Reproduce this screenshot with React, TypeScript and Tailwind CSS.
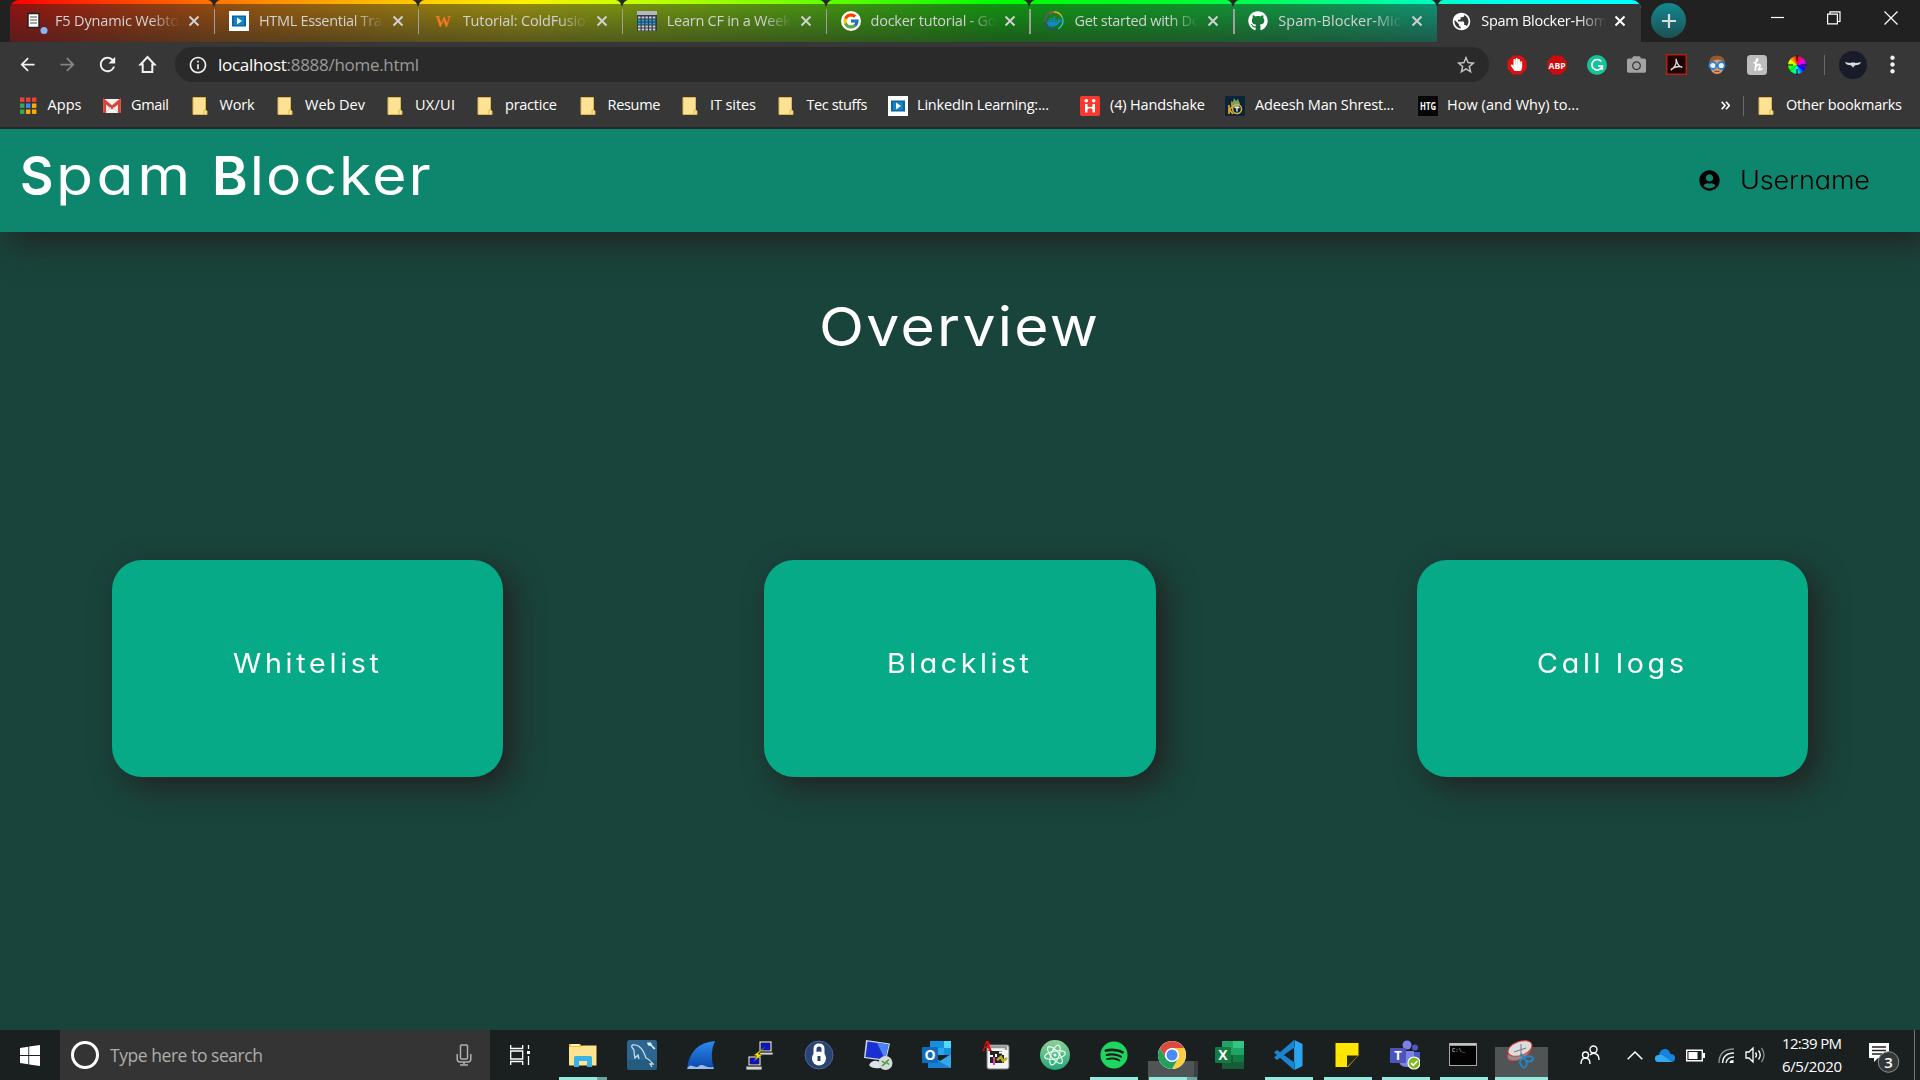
import React, { useLayoutEffect, useRef, useState } from "react";
import { FaUserCircle, FaGithub, FaSpotify, FaDocker, FaHandPaper, FaCamera } from "react-icons/fa";
import { FcGoogle } from "react-icons/fc";
import { MdArrowBack, MdArrowForward, MdRefresh, MdInfoOutline, MdStarBorder, MdPublic, MdMoreVert } from "react-icons/md";

/** Text tracked so that its glyph run spans exactly `w` pixels. */
function Fit({ w, className = "", inner = "", children }: { w: number; className?: string; inner?: string; children: React.ReactNode }) {
  const ref = useRef<HTMLSpanElement>(null);
  const [spacing, setSpacing] = useState(0);
  useLayoutEffect(() => {
    const el = ref.current;
    if (!el) return;
    const n = Math.max(2, (el.textContent || "").length);
    el.style.letterSpacing = "0px";
    const base = el.getBoundingClientRect().width;
    el.style.letterSpacing = "1px";
    const slope = el.getBoundingClientRect().width - base;
    const next = (w - base) / (slope * ((n - 1) / n));
    el.style.letterSpacing = next + "px";
    setSpacing(next);
  }, [w]);
  return (
    <span className={"block shrink-0 whitespace-nowrap " + className} style={{ width: w }}>
      <span ref={ref} className={"inline-block origin-left " + inner} style={{ letterSpacing: spacing }}>{children}</span>
    </span>
  );
}

const Svg = ({ s = 20, vb = "0 0 20 20", children }: { s?: number; vb?: string; children: React.ReactNode }) => (
  <svg width={s} height={s} viewBox={vb} className="block shrink-0">{children}</svg>
);

/* ---------- favicons ---------- */
const PageIcon = () => (
  <Svg s={26} vb="0 0 26 26">
    <rect x="1" y="5.500" width="11" height="14" fill="#fff" stroke="#222" strokeWidth="1.500" />
    <path d="M3 9h7M3 12h7M3 15h7" stroke="#888" strokeWidth="1.300" />
    <circle cx="17" cy="22.500" r="3.500" fill="#8ab4f8" />
  </Svg>
);
const LinkedInLearning = () => (
  <Svg><rect width="20" height="20" fill="#fff" /><rect x="3" y="4.500" width="14" height="11" fill="#0a66a8" /><rect x="5" y="6" width="10" height="8" fill="#1484c4" /><path d="M8 6.500l5 3.500-5 3.500z" fill="#fff" /></Svg>
);
const WIcon = () => <Svg><text x="10" y="15.500" textAnchor="middle" fontFamily="Liberation Serif" fontWeight="bold" fontSize="16" fill="#f37a20">W</text></Svg>;
const GridIcon = () => (
  <Svg>
    <rect width="20" height="20" fill="#333a4c" /><rect width="20" height="4" fill="#b4b8bc" />
    <path d="M1 6.500h18M1 15.500h18M1 18.500h18" stroke="#c8ccd2" strokeWidth="2" strokeDasharray="2.500 1.200" />
    <path d="M1 9.500h18M1 12.500h18" stroke="#1ea3dc" strokeWidth="2" strokeDasharray="2.500 1.200" />
  </Svg>
);
const GoogleIcon = () => <span className="flex size-5 items-center justify-center rounded-full bg-white"><FcGoogle size={18} /></span>;
const DockerIcon = () => (
  <span className="relative flex size-5 items-center justify-center">
    <FaDocker size={15} color="#1488c6" />
    <svg className="absolute inset-0" viewBox="0 0 20 20" fill="none" strokeWidth="1.300">
      <path d="M1 11A9 9 0 0 1 5 2.500" stroke="#8a3d9b" /><path d="M5 2.500A9 9 0 0 1 10 1" stroke="#e0405b" /><path d="M10 1A9 9 0 0 1 18 6" stroke="#e8a83c" />
      <path d="M18 6A9 9 0 0 1 14 18" stroke="#2bc4c8" /><path d="M14 18A9 9 0 0 1 1 11" stroke="#304a78" />
    </svg>
  </span>
);

const tabs = [
  { t: "F5 Dynamic Webto", w: 124, i: <PageIcon /> },
  { t: "HTML Essential Tra", w: 123, i: <LinkedInLearning /> },
  { t: "Tutorial: ColdFusio", w: 123, i: <WIcon /> },
  { t: "Learn CF in a Week", w: 124, i: <GridIcon /> },
  { t: "docker tutorial - Go", w: 126, i: <GoogleIcon /> },
  { t: "Get started with Do", w: 126, i: <DockerIcon /> },
  { t: "Spam-Blocker-Micl", w: 126, i: <FaGithub size={20} color="#fff" /> },
  { t: "Spam Blocker-Hom", w: 126, i: <MdPublic size={21} color="#fff" /> },
];

const Close = ({ color }: { color: string }) => (
  <svg width="12" height="12" viewBox="0 0 12 12" className="block"><path d="M1.500 1.500l9 9M10.500 1.500l-9 9" stroke={color} strokeWidth="2" /></svg>
);

function TabStrip() {
  return (
    <div className="flex h-[42px] bg-[#212121]">
      <div className="ml-[10px] flex h-[42px] w-[1631px] overflow-hidden rounded-t-[9px] bg-[linear-gradient(to_right,#ff0000_0px,#ff7800_210px,#ffc800_400px,#fff000_510px,#c8ff00_620px,#60ff00_820px,#00ff00_990px,#00ff30_1180px,#00ff90_1350px,#00ffe8_1480px,#00ffff_1600px)]">
        {tabs.map((tab, i) => {
          const active = i === 7;
          return (
            <div key={tab.t} className="relative flex w-[203.900px] shrink-0 flex-col">
              <div className="h-1" />
              <div className={active ? "h-[38px] bg-[#373737]" : "h-[38px] bg-[linear-gradient(to_bottom,#22222280,#252525c0)]"}>
                <div className={"flex h-[34px] items-center " + (active ? "pl-[14px]" : "pl-[15px]")}>
                  <div className={"flex h-[26px] w-[30px] items-center" + (i === 0 ? " pl-[2px]" : "")}>{tab.i}</div>
                  <div className="w-[129px] overflow-hidden [mask-image:linear-gradient(to_right,black_74%,transparent_97%)]">
                    <Fit w={tab.w} className={active ? "text-[14.500px] leading-6 text-white" : "text-[14.500px] leading-6 text-[#d2d2d2]"}>{tab.t}</Fit>
                  </div>
                  <div className="ml-[4px]"><Close color={active ? "#ffffff" : "#d0d0d0"} /></div>
                </div>
              </div>
              {i > 0 && (
                <svg className="absolute top-0 -left-[6px]" width="12" height="7" viewBox="0 0 12 7"><path d="M0 0H12Q7.500 1 6 7Q4.500 1 0 0z" fill="#252525" /></svg>
              )}
              {i > 0 && i < 7 && <div className="absolute top-[9px] left-0 h-[25px] w-[1.500px] bg-[#a0a0a0]" />}
            </div>
          );
        })}
      </div>
      <div className="mt-[3px] ml-[10px] flex size-[35px] items-center justify-center rounded-full bg-[linear-gradient(to_bottom,#128890,#1d5052)]">
        <svg width="14" height="14" viewBox="0 0 14 14"><path d="M7 0v14M0 7h14" stroke="#d8dede" strokeWidth="2.200" /></svg>
      </div>
      <div className="ml-auto flex h-9 items-center pr-[22px]">
        <svg width="14" height="14" viewBox="0 0 14 14" className="mr-[42px]"><path d="M0 6.500h13" stroke="#fff" strokeWidth="1.200" /></svg>
        <svg width="14" height="14" viewBox="0 0 14 14" className="mr-[43px]" fill="none" stroke="#fff" strokeWidth="1.200"><path d="M.6 3.100h9.800v9.800H.6zM3 3V.8h10v9.700h-2.400" /></svg>
        <svg width="14" height="14" viewBox="0 0 14 14"><path d="M.5.5l13 13M13.500.5l-13 13" stroke="#fff" strokeWidth="1.200" /></svg>
      </div>
    </div>
  );
}

/* ---------- toolbar ---------- */
const octagon = "M6 .5h8L19.500 6v8L14 19.500H6L.5 14V6z";
const extensions = [
  <span className="relative flex size-5 items-center justify-center"><Svg><path d={octagon} fill="#e10f12" /></Svg><FaHandPaper className="absolute" size={13} color="#fff" /></span>,
  <Svg><path d={octagon} fill="#cf0a0d" /><text x="10" y="13.500" fontSize="9.500" fontWeight="bold" textAnchor="middle" fill="#fff" fontFamily="Open Sans" textLength="17" lengthAdjust="spacingAndGlyphs">ABP</text></Svg>,
  <Svg><circle cx="10" cy="10" r="10" fill="#15c39a" /><path d="M14.300 6.500A5.300 5.300 0 1 0 15.300 11H11M15.300 10.500v4.500" fill="none" stroke="#fff" strokeWidth="1.700" /></Svg>,
  <FaCamera size={19} color="#a3a3a3" />,
  <Svg s={21}><rect x=".7" y=".7" width="18.600" height="18.600" fill="#1e0504" stroke="#b9200f" strokeWidth="1.400" /><path d="M9.500 4.500C10.500 8 9 12 4.500 15.500M9.700 5Q10.500 11 15.500 13M5 14.500Q9 11 15.500 12.300" fill="none" stroke="#ddd" strokeWidth="1.300" /></Svg>,
  <Svg><path d="M3 8Q3 1 10 1t7 7l-1 7q-2 4-6 4t-6-4z" fill="#d99a6b" /><path d="M2 11Q1 .5 10 .5T18 11q-1-6-7-6.500Q4 5 2 11z" fill="#96592f" /><circle cx="5.800" cy="10.500" r="3.500" fill="#e8f4ff" stroke="#2a7fd0" strokeWidth="1.800" /><circle cx="14.200" cy="10.500" r="3.500" fill="#e8f4ff" stroke="#2a7fd0" strokeWidth="1.800" /><path d="M7.500 16.300h5" stroke="#7d2f22" /></Svg>,
  <Svg><rect width="20" height="20" rx="3.500" fill="#bdbdbd" /><path d="M6.500 8Q12 6 10.500 4T8.300 16M8.500 12.500Q11 8.500 12.500 9.500T12 13.500 15.500 13.500" fill="none" stroke="#fff" strokeWidth="1.700" /></Svg>,
  <span className="relative flex size-5 items-center justify-center"><span className="size-[18px] rounded-full bg-[conic-gradient(#f00,#f0f,#00f,#0ff,#0f0,#ff0,#f00)]" /><svg className="absolute inset-0" viewBox="0 0 20 20"><path d="M10 0v6M10 14v6M0 10h6M14 10h6" stroke="#111" strokeWidth="1.200" /><path d="M4 4l12 12M16 4L4 16" stroke="#2226" strokeWidth=".6" /></svg></span>,
];

function Toolbar() {
  return (
    <div className="flex h-[45px] items-center pl-[17px] text-[#f1f1f1]">
      <MdArrowBack size={21} className="mr-[19px]" />
      <MdArrowForward size={21} color="#858585" className="mr-[18px]" />
      <MdRefresh size={23} className="mr-[17px]" />
      <svg width="23" height="23" viewBox="0 0 23 23" fill="none" stroke="#f1f1f1" strokeWidth="2" className="mr-[16px]"><path d="M11.500 4L4.500 11.500h2.200v7.500h9.600v-7.500h2.200z" /></svg>
      <div className="flex h-[35px] w-[1314px] items-center rounded-full bg-[#2a2a2a] pr-[12px] pl-[13px]">
        <MdInfoOutline size={20} className="mr-[10px]" />
        <Fit w={201} className="text-[17px] leading-7 text-[#9b9b9b]"><span className="text-white">localhost</span>:8888/home.html</Fit>
        <MdStarBorder size={22} color="#c6c6c6" className="ml-auto" />
      </div>
      <div className="ml-[7.500px] flex">
        {extensions.map((e, i) => <div key={i} className="flex w-10 items-center justify-center">{e}</div>)}
      </div>
      <div className="ml-[7px] h-[20px] w-px bg-[#6b6b6b]" />
      <div className="ml-[14px] flex size-7 items-center justify-center rounded-full bg-[#191b28]">
        <svg width="16" height="8" viewBox="0 0 16 8"><path d="M0 1q3 1 6 1l1-1 1 1 1-1 1 1q3 0 6-1-1 3-4 3-3 0-4 3-1-3-4-3T0 1z" fill="#d5d9e0" /></svg>
      </div>
      <MdMoreVert size={27} className="ml-[12.500px]" />
    </div>
  );
}

/* ---------- bookmarks ---------- */
const Folder = () => (
  <Svg s={20}><path d="M1 1.500h12.500v12.500l1.500 1v3.500H1z" fill="#fde293" stroke="#dcb850" strokeWidth="1" /><path d="M12 18v-4h1.500" stroke="#e0b840" fill="none" /></Svg>
);
const AppsIcon = () => (
  <Svg s={18} vb="0 0 18 18">
    {["#ea4335", "#ea4335", "#ea4335", "#34a853", "#4285f4", "#fbaf05", "#34a853", "#fbaf05", "#fbaf05"].map((c, i) => (
      <rect key={i} x={(i % 3) * 6} y={Math.floor(i / 3) * 6 + 0.5} width="4.400" height="4.400" fill={c} />
    ))}
  </Svg>
);
const Gmail = () => (
  <Svg s={18} vb="0 0 18 18"><rect x="0" y="2" width="18" height="14" rx="1.500" fill="#f2f2f2" /><path d="M1.600 16V4L9 10.500 16.400 4v12" fill="none" stroke="#db4437" strokeWidth="3" /><path d="M3 15l5-5M15 15l-5-5" stroke="#ccc" strokeWidth=".8" /></Svg>
);
const Handshake = () => (
  <Svg><rect width="20" height="20" rx="2" fill="#fa382f" /><circle cx="6.300" cy="4.800" r="1.800" fill="#fff" /><circle cx="13.700" cy="4.800" r="1.800" fill="#fff" /><path d="M5 8v8.500h2.500V13q2.500-1.500 5 0v3.500H15V8h-2.500v2.500q-2.500 1-5 0V8z" fill="#fff" /></Svg>
);
const Adeesh = () => (
  <Svg><rect width="20" height="20" fill="#0b2437" /><path d="M6 10V5l2 1 1-4 2 3 2-2 2 5-2 4z" fill="#7fa05a" /><path d="M4 9v9M4 14l4-4M4 13l4 5" stroke="#e9a820" strokeWidth="1.700" /><circle cx="12" cy="13" r="4.500" fill="none" stroke="#d8b14c" strokeWidth="1.500" /><path d="M9.500 11.500h5M12 11.500v4" stroke="#eee" strokeWidth="1.400" /></Svg>
);
const Htg = () => <Svg><rect width="20" height="20" fill="#060606" /><text x="10" y="14" fontSize="11" textAnchor="middle" fontWeight="bold" fill="#fff" fontFamily="Open Sans" textLength="16" lengthAdjust="spacingAndGlyphs">HTG</text></Svg>;

/* cell: item width up to the next item, gap: icon column, w: label width */
const bookmarks = [
  { t: "Apps", cell: 82.5, gap: 27.5, w: 34, i: <AppsIcon /> },
  { t: "Gmail", cell: 89, gap: 28.5, w: 38, i: <Gmail /> },
  { t: "Work", cell: 85.5, gap: 28, w: 35, i: <Folder /> },
  { t: "Web Dev", cell: 110, gap: 28, w: 60, i: <Folder /> },
  { t: "UX/UI", cell: 90, gap: 28, w: 40, i: <Folder /> },
  { t: "practice", cell: 102.5, gap: 28, w: 52, i: <Folder /> },
  { t: "Resume", cell: 102.5, gap: 28, w: 53, i: <Folder /> },
  { t: "IT sites", cell: 96, gap: 28, w: 46, i: <Folder /> },
  { t: "Tec stuffs", cell: 110, gap: 28.5, w: 61, i: <Folder /> },
  { t: "LinkedIn Learning:...", cell: 192, gap: 29, w: 132, i: <LinkedInLearning /> },
  { t: "(4) Handshake", cell: 145, gap: 30, w: 95, i: <Handshake /> },
  { t: "Adeesh Man Shrest...", cell: 193, gap: 30, w: 139, i: <Adeesh /> },
  { t: "How (and Why) to...", cell: 180, gap: 29, w: 132, i: <Htg /> },
];

function Bookmarks() {
  return (
    <div className="flex h-[40px] items-center border-b-2 border-[#373737] pb-[1px] pl-[20px] text-[14.500px] leading-6 text-white">
      {bookmarks.map((b) => (
        <div key={b.t} className="flex shrink-0 items-center" style={{ width: b.cell }}>
          <div className="shrink-0" style={{ width: b.gap }}>{b.i}</div>
          <Fit w={b.w} className="-mt-px">{b.t}</Fit>
        </div>
      ))}
      <div className="ml-auto flex items-center pr-[18px]">
        <svg width="9" height="9" viewBox="0 0 9 9" fill="none" stroke="#fff" strokeWidth="1.700"><path d="M.7 .7L4 4.500.7 8.300M5 .7l3.300 3.800L5 8.300" /></svg>
        <div className="ml-[13px] h-[20px] w-px bg-[#6b6b6b]" />
        <div className="ml-[14px] w-[28px]"><Folder /></div>
        <Fit w={116} className="-mt-px">Other bookmarks</Fit>
      </div>
    </div>
  );
}

/* ---------- page ---------- */
function Page() {
  return (
    <main className="flex h-[901px] flex-col overflow-hidden bg-[#19443b] font-['Inter',sans-serif] [font-feature-settings:'cv11'] text-white">
      <header className="flex h-[103px] shrink-0 items-center bg-[#0e866d] pl-[20px] shadow-[10px_10px_30px_#222222]">
        <h1 className="-mt-[9px] flex gap-[21px] text-[54px] leading-[70px] font-normal">
          <Fit w={171} inner="scale-x-[1.120]"><b className="inline-block origin-left scale-x-[0.850] font-semibold tracking-[-3px]">S</b>pam</Fit>{" "}
          <Fit w={219} inner="scale-x-[1.090]"><b className="inline-block origin-left scale-x-[0.920] font-semibold tracking-[-1px]">B</b>locker</Fit>
        </h1>
        <div className="ml-auto flex items-center pr-[50px] text-black">
          <FaUserCircle size={21} className="mr-[20px]" />
          <Fit w={130} inner="scale-x-[1.080]" className="-mt-[2px] text-[25px] leading-9 font-light">Username</Fit>
        </div>
      </header>
      <div className="mt-[60px] flex justify-center pr-[3px]">
        <Fit w={279} inner="scale-x-[1.090]" className="text-[54px] leading-[70px]">Overview</Fit>
      </div>
      <div className="mt-[198px] flex justify-between px-[112px]">
        {[{ t: "Whitelist", w: 146 }, { t: "Blacklist", w: 142 }, { t: "Call logs", w: 147 }].map((c) => (
          <section key={c.t} className="flex h-[217px] w-[391.300px] items-center justify-center rounded-[30px] bg-[#06aa87] pr-[4px] pb-[10px] shadow-[10px_10px_30px_#222222]">
            <Fit w={c.w} inner="scale-x-[1.060]" className="text-[27px] leading-10">{c.t}</Fit>
          </section>
        ))}
      </div>
    </main>
  );
}

/* ---------- taskbar ---------- */
const V = ({ children }: { children: React.ReactNode }) => <svg width="30" height="30" viewBox="0 0 30 30" className="block">{children}</svg>;

const apps = [
  { k: "explorer", bar: true, i: <V><path d="M1 4h11l2 2h14v19H1z" fill="#f8c22c" /><path d="M1 7h12l1.500-1.500H28.500V25.500H1z" fill="#fee391" /><path d="M3 5h8" stroke="#fff" strokeWidth="1.500" /><path d="M6 27V17.500q0-1.500 1.500-1.500h15q1.500 0 1.500 1.500V27h-5v-6h-8v6z" fill="#39b1ea" /></V> },
  { k: "mysql", bar: false, i: <V><rect width="30" height="30" rx="2.500" fill="#2c6690" /><path d="M0 20h30v7.500q0 2.500-2.500 2.500h-25Q0 30 0 27.500z" fill="#20506f" opacity=".5" /><path d="M5 5q7-1 11 6 2 4 3 7 3 1 7 6h-3l2 3M5 5q-1 2 2 5 0 4 1 8l3-3 1 4" fill="none" stroke="#c4dbe8" strokeWidth="1.300" /><path d="M20 2.500l1 3 3 .5 3 3.500 1.500-1-3.500-3.500-1-2.500z" fill="#e5f0f5" /></V> },
  { k: "wireshark", bar: false, i: <V><defs><linearGradient id="fin" x2="0" y2="1"><stop stopColor="#2b8cf0" /><stop offset="1" stopColor="#0b45a8" /></linearGradient></defs><path d="M1 29Q4 3 29 1q-6 12-1 28z" fill="url(#fin)" /><path d="M1 29q2-5 6-3t6 0 6 0 8 1l1 2z" fill="#9bbbe8" /></V> },
  { k: "putty", bar: false, i: <V><g stroke="#222" strokeWidth=".8"><path d="M14 1h13v11H14zM15 12h13v3H14zM3 16h13v10H3zM1 26h16v4H1z" fill="#d4d4d4" /><path d="M16 3h9v7h-9zM5 18h9v6H5z" fill="#0a12d8" /></g><path d="M20 7l-7 7 4 1-8 6 3-5-3-1z" fill="#ffe500" stroke="#665500" strokeWidth=".5" /></V> },
  { k: "keepass", bar: false, i: <V><circle cx="15" cy="15" r="14" fill="#294474" stroke="#4d6594" strokeWidth="1" /><path d="M11 16V9q0-4 4-4t4 4v7" stroke="#fff" strokeWidth="3" fill="none" /><circle cx="15" cy="18.500" r="7" fill="#fff" /><path d="M15 16v5" stroke="#294474" strokeWidth="3" /></V> },
  { k: "rdp", bar: false, i: <V><path d="M3 0l24 3.500L23 21 1 18z" fill="#c9d6ea" /><path d="M4.500 1.500l21 3L22 19.500 2.500 17z" fill="#1a2fd0" /><path d="M14 2.800l11.500 1.700L22 19.500z" fill="#4c82f4" /><path d="M6 25q3-5 8-4l6 2-3 5q-8 1-11-3z" fill="#dce2ea" /><circle cx="22.500" cy="23" r="7" fill="#d7dbd7" /><path d="M19 21l3 2.500-3 2.500M26 19.500l-3 2.500 3 2.500" stroke="#3c9c38" fill="none" strokeWidth="1.500" /></V> },
  { k: "outlook", bar: false, i: <V><path d="M8 1h21v14H8z" fill="#1490df" /><path d="M15 8h7v7h-7z" fill="#28a8ea" /><path d="M22 1h7v7h-7z" fill="#50d9ff" /><path d="M6 14l12 7 11-7v14H6z" fill="#36a5ea" /><path d="M6 15l23 13H6z" fill="#1a7fd0" /><rect y="7" width="16" height="16" rx="1" fill="#0f6cbd" /><text x="8" y="20" fontSize="14" fontWeight="bold" fill="#fff" textAnchor="middle" fontFamily="Open Sans">O</text></V> },
  { k: "editor", bar: false, i: <V><rect x="6" y="5" width="22" height="24" rx="2" fill="#f4f4f4" stroke="#777" /><path d="M8 7h17v3" stroke="#999" strokeWidth="2.500" fill="none" /><path d="M9 11h12v4h2v8H9z" fill="#252525" /><path d="M9 16h3M15 14v3M18 12.500h3" stroke="#fff" strokeWidth="2" /><path d="M16 20l4-3 2 4 4-3" stroke="#b8ae20" strokeWidth="2.500" fill="none" /><path d="M13 17v8" stroke="#e0439b" strokeWidth="2" /><text x="6" y="11" fontSize="15" fontWeight="bold" fill="#e10a0a" textAnchor="middle" fontFamily="Liberation Serif">A</text></V> },
  { k: "atom", bar: false, i: <V><defs><linearGradient id="atom" x2="0" y2="1"><stop stopColor="#8fd19a" /><stop offset="1" stopColor="#20a877" /></linearGradient></defs><circle cx="15" cy="15" r="15" fill="url(#atom)" /><g fill="none" stroke="#eafbf0" strokeWidth="1.200"><ellipse cx="15" cy="15" rx="4" ry="10.500" transform="rotate(20 15 15)" /><ellipse cx="15" cy="15" rx="4" ry="10.500" transform="rotate(80 15 15)" /><ellipse cx="15" cy="15" rx="4" ry="10.500" transform="rotate(140 15 15)" /></g><circle cx="15" cy="15" r="1.500" fill="#fff" /></V> },
  { k: "spotify", bar: true, i: <FaSpotify size={28} color="#1ed760" /> },
  { k: "chrome", bar: true, i: <V><g transform="translate(15 15)"><circle r="14" fill="#fff" /><path d="M-12.120-7A14 14 0 0 1 12.120-7L0-7A7 7 0 0 0-6.060 3.500z" fill="#dc4a3d" /><path d="M12.120-7A14 14 0 0 1 0 14L6.060 3.500A7 7 0 0 0 0-7z" fill="#fccd3e" /><path d="M0 14A14 14 0 0 1-12.120-7L-6.060 3.500A7 7 0 0 0 6.060 3.500z" fill="#20a05a" /><circle r="6.800" fill="#fff" /><circle r="5.500" fill="#4a8af4" /></g></V> },
  { k: "excel", bar: false, i: <V><path d="M7 1h22v28H7z" fill="#21a366" /><path d="M18 1h11v7H18z" fill="#33c481" /><path d="M7 15h22v14H7z" fill="#185c37" /><path d="M18 15h11v7H18z" fill="#107c41" /><rect y="7" width="16" height="16" rx="1" fill="#107c41" /><text x="8" y="20" fontSize="14" fontWeight="bold" fill="#fff" textAnchor="middle" fontFamily="Open Sans">X</text></V> },
  { k: "vscode", bar: true, i: <V><path d="M21 0v30L1 12.500 4 10 22 23V7L4 20 1 17.500z" fill="#1a84cf" /><path d="M21.500 0l8 4v22l-8 4z" fill="#2ba5f0" /></V> },
  { k: "notes", bar: true, i: <V><path d="M3.500 3h23v12.500L16 27H3.500z" fill="#ffe500" /><path d="M15 15.500h11.500L15 27z" fill="#26281c" /></V> },
  { k: "teams", bar: true, i: <V><circle cx="17" cy="5" r="4.500" fill="#7b83eb" /><circle cx="25" cy="7.500" r="3" fill="#5059c9" /><path d="M20 12h10v8q0 5-5 5h-5z" fill="#5059c9" /><path d="M9 11h15v9q0 7-7.500 7T9 20z" fill="#7b83eb" /><rect y="8" width="16" height="15" rx="1" fill="#4b53bc" /><text x="8" y="20" fontSize="13" fontWeight="bold" fill="#fff" textAnchor="middle" fontFamily="Open Sans">T</text><circle cx="24" cy="23" r="6" fill="#80bb18" stroke="#fff" strokeWidth="1.200" /><path d="M21 23l2.300 2.300L27.300 21" stroke="#fff" strokeWidth="1.800" fill="none" /></V> },
  { k: "cmd", bar: true, i: <V><rect x="1.500" y="3.500" width="27" height="22" fill="#030303" stroke="#a6a6a6" /><path d="M2 4.500h26" stroke="#c6c6c6" strokeWidth="2.500" /><text x="4" y="11.500" fontSize="5.500" fill="#ddd" fontFamily="Liberation Mono">C:\_</text></V> },
  { k: "snip", bar: true, i: <V><ellipse cx="13" cy="13" rx="12.500" ry="6.500" transform="rotate(-25 13 13)" fill="#8b8f8f" stroke="#c93636" /><ellipse cx="14" cy="8.500" rx="12.500" ry="7" transform="rotate(-20 14 8.500)" fill="#dadddd" stroke="#d63a3a" /><path d="M15 4v13M8 12l12-4" stroke="#777" /><path d="M15 14l4 5M18 18q5-3 8-1t-1 4-6-2M18 18q4 4 2 8t-5-1 3-7" stroke="#2482c5" strokeWidth="2" fill="none" /></V> },
];

function Taskbar() {
  return (
    <footer className="flex h-[50px] bg-[#1a201f] text-white">
      <div className="flex w-[60px] items-center justify-center">
        <svg width="20" height="21" viewBox="0 0 20 21" fill="#fff"><path d="M0 3l8.300-1.200V10H0zM9.200 1.600L20 0v10H9.200zM0 11h8.300v8.200L0 18zM9.200 11H20v10L9.200 19.400z" /></svg>
      </div>
      <div className="flex w-[430px] items-center bg-[#343434] pr-[18px] pl-[11px]">
        <div className="size-[28px] rounded-full border-[3.500px] border-white" />
        <Fit w={153} className="ml-[11px] text-[17.500px] leading-7 text-[#adadad]">Type here to search</Fit>
        <svg width="16" height="22" viewBox="0 0 16 22" className="ml-auto" fill="none" stroke="#b0b0b0" strokeWidth="1.500"><rect x="4.500" y="1" width="7" height="14" rx="1" /><path d="M1.200 10v5q0 3 3 3h7.600q3 0 3-3v-5M8 18v3M4 21h8" /></svg>
      </div>
      <div className="flex w-[63px] items-center pl-[20px]">
        <svg width="21" height="20" viewBox="0 0 21 20" fill="none" stroke="#fff" strokeWidth="1.300"><path d="M.7 0v3.500h12V0M.7 6h12v8h-12zM.7 20v-3.500h12V20M18.500 0v4M18.500 11v9" /><path d="M17 6h3v3h-3z" fill="#fff" stroke="none" /></svg>
      </div>
      {apps.map((a, i) => {
        const grouped = a.k === "explorer" || a.k === "chrome";
        const snip = a.k === "snip";
        return (
          <div key={a.k} className={"relative flex shrink-0 justify-center " + (i < 10 ? "w-[59px]" : "w-[58.200px]")}>
            {snip && <div className="absolute top-[17px] left-[3px] h-[33px] w-[53px] bg-[#505454]" />}
            {a.k === "chrome" && <div className="absolute top-[31px] left-[5px] h-[19px] w-[50px] border-r-4 border-[#3c4040] bg-[#505454]" />}
            <div className="relative flex h-[50px] items-center">{a.i}</div>
            {a.bar && (
              <div className={"absolute bottom-0 flex h-[3px] " + (snip ? "left-[3px] w-[53px]" : "left-[6px] w-[48px]")}>
                <div className="flex-1 bg-[#92ebdc]" />
                {grouped && <div className="w-[10px] bg-[#68a59c]" />}
              </div>
            )}
          </div>
        );
      })}
      <div className="ml-auto flex shrink-0 items-center">
        <svg width="20" height="20" viewBox="0 0 20 20" fill="none" stroke="#fff" strokeWidth="1.400" className="mr-[27px]"><circle cx="13.500" cy="4.500" r="3.500" /><circle cx="5.500" cy="10" r="3" /><path d="M1 19q0-6 4.500-6t4.500 6M10 10q3-3 6-1 3 1 3 6" /></svg>
        <svg width="16" height="9" viewBox="0 0 16 9" fill="none" stroke="#fff" strokeWidth="1.500" className="mr-[12px]"><path d="M.7 8.300L8 1l7.300 7.300" /></svg>
        <svg width="20" height="13" viewBox="0 0 20 13" className="mr-[11px]"><path d="M4 13q-4 0-4-3.500T4 6q1-6 6-6 4 0 5.500 5Q20 5 20 9t-4 4z" fill="#1683dc" /><path d="M4 13q-4 0-4-3.500T4 6q3-1 6 2l7 5z" fill="#36a7f1" /></svg>
        <svg width="19" height="13" viewBox="0 0 19 13" className="mr-[13px]"><path d="M.7 1.200h15.600v10.600H.7z" fill="none" stroke="#fff" strokeWidth="1.400" /><path d="M2.500 3h9v7h-9zM16.500 4H19v5h-2.500z" fill="#fff" /></svg>
        <svg width="17" height="17" viewBox="0 0 17 17" fill="none" strokeWidth="1.400" className="mr-[10px]"><path d="M1 16Q1 2 16 2" stroke="#8b8f8f" /><path d="M4.500 16Q5 6 16 6M8 16q1-6 8-6" stroke="#f0f0f0" /><path d="M11.500 16q0-3 4-3v3z" fill="#fff" /></svg>
        <svg width="20" height="18" viewBox="0 0 20 18" fill="none" stroke="#fff" strokeWidth="1.300" className="mr-[17px]"><path d="M1 6h3l4-4v14l-4-4H1zM10.500 6.500q2 2.500 0 5M13.500 4.500q3.500 4.500 0 9" /><path d="M16.500 2q5 7 0 14" stroke="#888" /></svg>
        <div className="flex h-[50px] w-[60px] flex-col items-center pt-[2px] text-[15px] leading-[23px]"><Fit w={60}>12:39 PM</Fit><Fit w={60}>6/5/2020</Fit></div>
        <svg width="32" height="32" viewBox="0 0 32 32" className="mt-[5px] mr-[13px] ml-[27px]"><path d="M0 1h20v15H9l-4 4v-4H0z" fill="#fff" /><path d="M3 5h14M3 8.500h14M3 12h10" stroke="#222" strokeWidth="1.300" /><circle cx="19.500" cy="20" r="10.300" fill="#333939" stroke="#8a8e8e" /><text x="19.500" y="25.500" fontSize="15" fontWeight="600" fill="#fff" textAnchor="middle" fontFamily="Open Sans">3</text></svg>
        <div className="mr-[5px] h-[50px] w-px bg-[#747878]" />
      </div>
    </footer>
  );
}

export default function App() {
  return (
    <div className="h-[1080px] w-[1920px] overflow-hidden bg-[#373737] font-['Open_Sans','Noto_Sans',sans-serif]">
      <TabStrip />
      <Toolbar />
      <Bookmarks />
      <div className="h-[2px] bg-[#262829]" />
      <Page />
      <Taskbar />
    </div>
  );
}
